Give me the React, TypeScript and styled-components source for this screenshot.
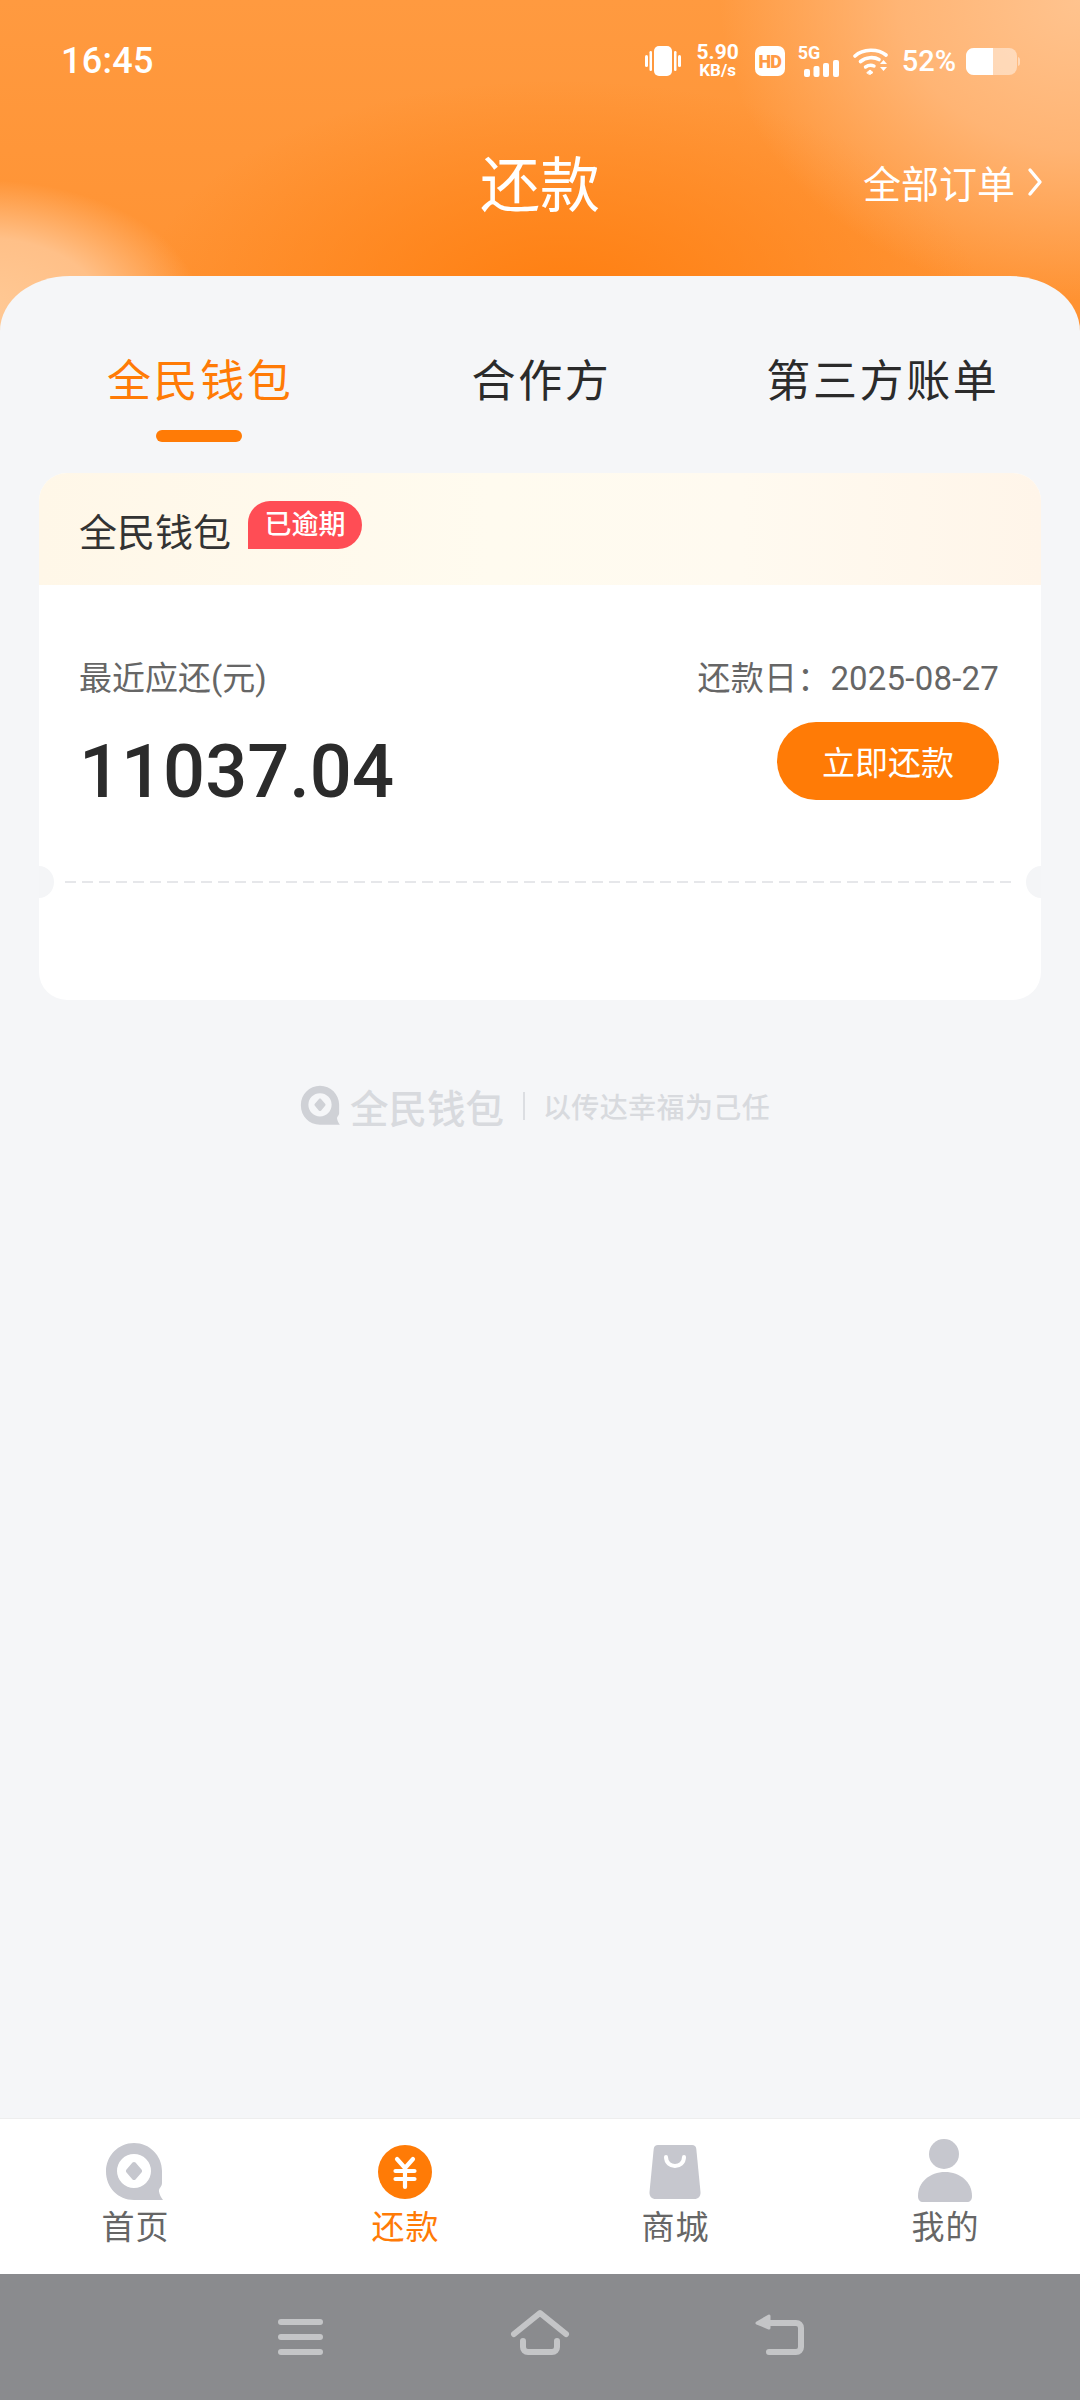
import styled, { createGlobalStyle } from 'styled-components'

const GlobalStyle = createGlobalStyle`
  html, body {
    margin: 0;
    padding: 0;
    background: #f5f6f8;
    font-family: Roboto, 'Noto Sans CJK SC', sans-serif;
  }
  * { box-sizing: border-box; }
`

const tabs = ['全民钱包', '合作方', '第三方账单']

export default function App() {
  return (
    <Shell>
      <GlobalStyle />
      <Header>
        <StatusBar>
          <Time>16:45</Time>
          <StatusIcons>
            <Vibrate />
            <Speed>
              <SpeedValue>5.90</SpeedValue>
              <SpeedUnit>KB/s</SpeedUnit>
            </Speed>
            <HdBadge>HD</HdBadge>
            <Signal>
              <SignalLabel>5G</SignalLabel>
              <SignalBars />
            </Signal>
            <Wifi />
            <Percent>52%</Percent>
            <Battery />
          </StatusIcons>
        </StatusBar>
        <NavBar>
          <span />
          <Title>还款</Title>
          <Orders>
            全部订单
            <svg width="16" height="30" viewBox="0 0 16 30" fill="none">
              <path d="M3 3L13 15L3 27" stroke="#fff" strokeWidth="3.4" strokeLinecap="round" strokeLinejoin="round" />
            </svg>
          </Orders>
        </NavBar>
      </Header>

      <Sheet>
        <Tabs>
          {tabs.map((t, i) => (
            <Tab key={t} $active={i === 0}>
              {t}
              {i === 0 && <TabMark />}
            </Tab>
          ))}
        </Tabs>

        <Card>
          <CardHead>
            <CardTitle>全民钱包</CardTitle>
            <Overdue>已逾期</Overdue>
          </CardHead>
          <CardBody>
            <Label>最近应还(元)</Label>
            <DueDate>还款日：2025-08-27</DueDate>
            <Amount>11037.04</Amount>
            <PayButton>立即还款</PayButton>
          </CardBody>
          <Divider />
          <CardFoot />
        </Card>

        <Brand>
          <BrandLogo width="42" height="41" viewBox="0 0 60 60">
            <LogoShape color="#cfd1d6" />
          </BrandLogo>
          <BrandName>全民钱包</BrandName>
          <BrandRule />
          <Slogan>以传达幸福为己任</Slogan>
        </Brand>
      </Sheet>

      <TabBar>
        <BarItem>
          <BarIcon>
            <HomeLogo width="60" height="60" viewBox="0 0 60 60">
              <LogoShape color="#c6c7ce" />
            </HomeLogo>
          </BarIcon>
          <BarLabel>首页</BarLabel>
        </BarItem>
        <BarItem $active>
          <BarIcon>
            <svg width="60" height="60" viewBox="0 0 60 60" fill="none">
              <circle cx="30" cy="30" r="27" fill="#ff7b06" />
              <path
                d="M22 17L30 26L38 17M20.500 29H39.500M20.500 37H39.500M30 27V45"
                stroke="#fff"
                strokeWidth="4.200"
                strokeLinecap="round"
                strokeLinejoin="round"
              />
            </svg>
          </BarIcon>
          <BarLabel>还款</BarLabel>
        </BarItem>
        <BarItem>
          <BarIcon>
            <svg width="60" height="60" viewBox="0 0 60 60" fill="none">
              <path
                d="M13 3H47C49.5 3 51 4.5 51.3 7L55.5 50C55.8 54.5 53 57 49.5 57H10.5C7 57 4.2 54.5 4.5 50L8.7 7C9 4.5 10.500 3 13 3Z"
                fill="#c6c7ce"
              />
              <path d="M21 15C21 27 39 27 39 15" stroke="#fff" strokeWidth="4" strokeLinecap="round" />
            </svg>
          </BarIcon>
          <BarLabel>商城</BarLabel>
        </BarItem>
        <BarItem>
          <BarIcon>
            <PersonIcon width="60" height="60" viewBox="0 0 60 60">
              <circle cx="29" cy="12" r="15" fill="#c6c7ce" />
              <path
                d="M3 54C3 40 15 30 30 30C45 30 57 40 57 54C57 58 55 60 52 60H8C5 60 3 58 3 54Z"
                fill="#c6c7ce"
              />
            </PersonIcon>
          </BarIcon>
          <BarLabel>我的</BarLabel>
        </BarItem>
      </TabBar>

      <SystemNav>
        <svg width="60" height="60" viewBox="0 0 60 60" fill="#c4c5c7">
          <rect x="8" y="12" width="45" height="6" rx="3" />
          <rect x="8" y="27" width="45" height="6" rx="3" />
          <rect x="8" y="42" width="45" height="6" rx="3" />
        </svg>
        <svg width="60" height="60" viewBox="0 0 60 60" fill="none" stroke="#c4c5c7" strokeWidth="6" strokeLinecap="round" strokeLinejoin="round">
          <path d="M4 27L30 6L56 27" />
          <path d="M13 34V40C13 43 15 45 18 45H42C45 45 47 43 47 40V34" />
        </svg>
        <svg width="60" height="60" viewBox="0 0 60 60" fill="none" stroke="#c4c5c7" strokeWidth="6" strokeLinecap="round" strokeLinejoin="round">
          <path d="M18 16H46C49 16 51 18 51 21V40C51 43 49 45 46 45H19" />
          <path d="M7 16L19 9V21Z" fill="#c4c5c7" strokeWidth="3" />
        </svg>
      </SystemNav>
    </Shell>
  )
}

function LogoShape({ color }: { color: string }) {
  return (
    <g fill={color}>
      <path
        fillRule="evenodd"
        d="M30 1C45.500 1 58 13.500 58 29V41C58 45 54.500 46 55 49.500C55.500 52.500 57 55.500 59 58H30C14 58 2 45.500 2 29.500C2 13.500 14.500 1 30 1ZM30 12A17 17 0 1 0 30 46A17 17 0 1 0 30 12Z"
      />
      <path d="M28.500 20.500C29.300 19.700 30.700 19.700 31.500 20.500L37.500 27.500C38.300 28.300 38.300 29.700 37.500 30.500L31.500 37.500C30.700 38.300 29.300 38.300 28.500 37.500L22.500 30.500C21.700 29.700 21.700 28.300 22.500 27.500Z" />
    </g>
  )
}

function Vibrate() {
  return (
    <svg width="36" height="30" viewBox="0 0 36 30" fill="#fff">
      <rect x="9" y="0" width="18" height="30" rx="5" />
      <rect x="0" y="9" width="3" height="12" rx="1.500" />
      <rect x="4.500" y="5" width="2.500" height="20" rx="1.250" />
      <rect x="29" y="5" width="2.500" height="20" rx="1.250" />
      <rect x="33" y="9" width="3" height="12" rx="1.500" />
    </svg>
  )
}

function SignalBars() {
  return (
    <svg width="36" height="17" viewBox="0 0 36 17" fill="#fff">
      <rect x="0" y="9" width="6" height="8" rx="2" />
      <rect x="9.500" y="6" width="6" height="11" rx="2" />
      <rect x="19" y="3" width="6" height="14" rx="2" />
      <rect x="29" y="0" width="6" height="17" rx="2" />
    </svg>
  )
}

function Wifi() {
  return (
    <svg width="36" height="28" viewBox="0 0 36 28" fill="none" stroke="#fff" strokeLinecap="round">
      <path d="M2 9C10 1.500 25 1.500 33 8" strokeWidth="3.600" />
      <path d="M7.500 14.500C13 10 21 9.500 26 12.500" strokeWidth="3.600" />
      <path d="M12.500 20C15.500 18 18.500 18 21 19" strokeWidth="3.400" />
      <path d="M14 25.500L17 23L20 25.500L17 27.500Z" fill="#fff" strokeWidth="1" />
      <path d="M27 17L30.500 13L34 17ZM27 20H34L30.500 24Z" fill="#fff" stroke="none" />
    </svg>
  )
}

function Battery() {
  return (
    <svg width="54" height="27" viewBox="0 0 54 27">
      <rect x="0" y="0" width="51" height="27" rx="8" fill="#fff" opacity="0.45" />
      <path d="M8 0H27V27H8C3.500 27 0 23.500 0 19V8C0 3.500 3.500 0 8 0Z" fill="#fff" />
      <path d="M52 9C53.500 9.500 54 10.500 54 12V15C54 16.500 53.500 17.500 52 18Z" fill="#fff" opacity="0.45" />
    </svg>
  )
}

const Shell = styled.div`
  display: flex;
  flex-direction: column;
  width: 1080px;
  height: 2400px;
  overflow: hidden;
  background-color: #f5f6f8;
  background-image:
    radial-gradient(220px 128px at -20px 308px, #ffc995 0%, #ffc088 55%, rgba(255, 170, 100, 0) 100%),
    radial-gradient(360px 300px at 1080px 0px, #ffc38e 0%, rgba(255, 190, 135, 0.75) 50%, rgba(255, 170, 100, 0) 100%),
    radial-gradient(420px 220px at 560px 300px, #ff7f11 0%, rgba(255, 127, 17, 0) 100%),
    linear-gradient(180deg, #ff9a40 0%, #ff9130 100%);
  background-repeat: no-repeat;
  background-size: 1080px 340px;
`

const Header = styled.header`
  flex: none;
  height: 276px;
  color: #fff;
`

const StatusBar = styled.div`
  display: flex;
  align-items: center;
  justify-content: space-between;
  height: 120px;
  padding: 2px 60px 0 61px;
`

const Time = styled.div`
  font-size: 36px;
  font-weight: 500;
  letter-spacing: 0.3px;
`

const StatusIcons = styled.div`
  display: flex;
  align-items: center;
  gap: 13px;
  > svg:first-child {
    margin-right: 3px;
  }
`

const Speed = styled.div`
  display: flex;
  flex-direction: column;
  align-items: center;
  width: 42px;
  margin-right: 3px;
  font-weight: 700;
`

const SpeedValue = styled.span`
  font-size: 21px;
  line-height: 19px;
`

const SpeedUnit = styled.span`
  font-size: 17px;
  line-height: 17px;
`

const HdBadge = styled.div`
  display: flex;
  align-items: center;
  justify-content: center;
  width: 30px;
  height: 30px;
  border-radius: 7px;
  background: #fff;
  color: #ff9a45;
  font-size: 18px;
  font-weight: 900;
  letter-spacing: -1px;
`

const Signal = styled.div`
  display: flex;
  flex-direction: column;
  width: 42px;
  > svg {
    align-self: flex-end;
  }
`

const SignalLabel = styled.span`
  font-size: 18px;
  font-weight: 700;
  line-height: 15px;
`

const Percent = styled.span`
  font-size: 29px;
  font-weight: 500;
  margin-right: -3px;
`

const NavBar = styled.div`
  display: grid;
  grid-template-columns: 1fr auto 1fr;
  align-items: center;
  height: 130px;
  padding-right: 37px;
`

const Title = styled.h1`
  margin: 2px 0 0 37px;
  font-size: 60px;
  font-weight: 400;
  line-height: 130px;
`

const Orders = styled.div`
  display: flex;
  align-items: center;
  justify-content: flex-end;
  gap: 12px;
  height: 60px;
  padding-bottom: 9px;
  font-size: 38px;
`

const Sheet = styled.main`
  flex: 1;
  background: #f5f6f8;
  border-radius: 70px 70px 0 0 / 55px 55px 0 0;
`

const Tabs = styled.nav`
  display: grid;
  grid-template-columns: repeat(3, 1fr);
  padding: 76px 28px 0;
  height: 197px;
`

const Tab = styled.div<{ $active: boolean }>`
  display: flex;
  flex-direction: column;
  align-items: center;
  padding-left: 3px;
  color: ${p => (p.$active ? '#ff7b06' : '#2b2b2b')};
  font-size: 44px;
  letter-spacing: 2.6px;
  line-height: 60px;
`

const TabMark = styled.i`
  display: block;
  width: 86px;
  height: 12px;
  margin: 18px 0 0 -3px;
  border-radius: 6px;
  background: #ff7b06;
`

const Card = styled.section`
  margin: 0 39px;
  height: 527px;
  border-radius: 28px;
  background: #fff;
  overflow: hidden;
`

const CardHead = styled.div`
  display: flex;
  align-items: flex-start;
  height: 112px;
  padding: 28px 0 0 40px;
  background: linear-gradient(90deg, #fff7e8 0%, #fffbef 45%, #fffaf0 70%, #fff5e9 100%);
`

const CardTitle = styled.span`
  margin-top: 1px;
  color: #333;
  font-size: 38px;
  line-height: 62px;
`

const Overdue = styled.span`
  width: 114px;
  height: 48px;
  margin-left: 17px;
  border-radius: 22px 24px 24px 0;
  background: #ff4d55;
  color: #fff;
  font-size: 27px;
  font-weight: 500;
  line-height: 48px;
  text-align: center;
`

const CardBody = styled.div`
  display: grid;
  grid-template-columns: 1fr auto;
  grid-template-rows: 40px 78px;
  row-gap: 26px;
  align-items: center;
  height: 296px;
  padding: 71px 42px 0 40px;
`

const Label = styled.div`
  color: #666;
  font-size: 33px;
`

const DueDate = styled.div`
  color: #666;
  font-size: 33px;
  letter-spacing: 0.2px;
  text-align: right;
`

const Amount = styled.div`
  align-self: start;
  padding-top: 11px;
  color: #2b2b2b;
  font-size: 74px;
  font-weight: 500;
  line-height: 78px;
`

const PayButton = styled.button`
  width: 222px;
  height: 78px;
  padding: 0;
  border: 0;
  border-radius: 39px;
  background: #ff7b06;
  color: #fff;
  font: inherit;
  font-size: 33px;
  justify-self: end;
`

const Divider = styled.div`
  position: relative;
  height: 2px;
  margin: 0 28px 0 26px;
  background: repeating-linear-gradient(90deg, #e6e7ea 0 11px, transparent 11px 17px);
  &::before,
  &::after {
    content: '';
    position: absolute;
    top: -15px;
    width: 30px;
    height: 32px;
    border-radius: 50%;
    background: #f4f5f7;
  }
  &::before {
    left: -41px;
  }
  &::after {
    right: -43px;
  }
`

const CardFoot = styled.div`
  height: 117px;
`

const Brand = styled.div`
  display: flex;
  align-items: center;
  justify-content: center;
  height: 41px;
  margin-top: 85px;
  padding-right: 11px;
  color: #d8dade;
`

const BrandLogo = styled.svg`
  flex: none;
  margin-right: -2px;
`

const BrandName = styled.span`
  margin-left: 11px;
  font-size: 38.500px;
  font-weight: 500;
`

const BrandRule = styled.i`
  width: 2px;
  height: 28px;
  margin: 0 18px 0 19px;
  background: #dcdee2;
`

const Slogan = styled.span`
  font-size: 28px;
  font-weight: 500;
  letter-spacing: 0.4px;
`

const TabBar = styled.nav`
  flex: none;
  display: grid;
  grid-template-columns: repeat(4, 1fr);
  height: 156px;
  border-top: 1px solid #eeeeee;
  background: #fff;
`

const BarItem = styled.div<{ $active?: boolean }>`
  display: flex;
  flex-direction: column;
  align-items: center;
  padding-top: 23px;
  color: ${p => (p.$active ? '#ff7b06' : '#666')};
`

const BarIcon = styled.div`
  display: flex;
  height: 60px;
`

const HomeLogo = styled.svg`
  margin-left: -2px;
`

const PersonIcon = styled.svg`
  overflow: visible;
`

const BarLabel = styled.span`
  margin-top: 4px;
  padding-left: 1px;
  font-size: 33px;
  letter-spacing: 1px;
  line-height: 44px;
`

const SystemNav = styled.div`
  flex: none;
  display: flex;
  align-items: center;
  justify-content: center;
  gap: 180px;
  height: 126px;
  background: #8a8b8e;
`
